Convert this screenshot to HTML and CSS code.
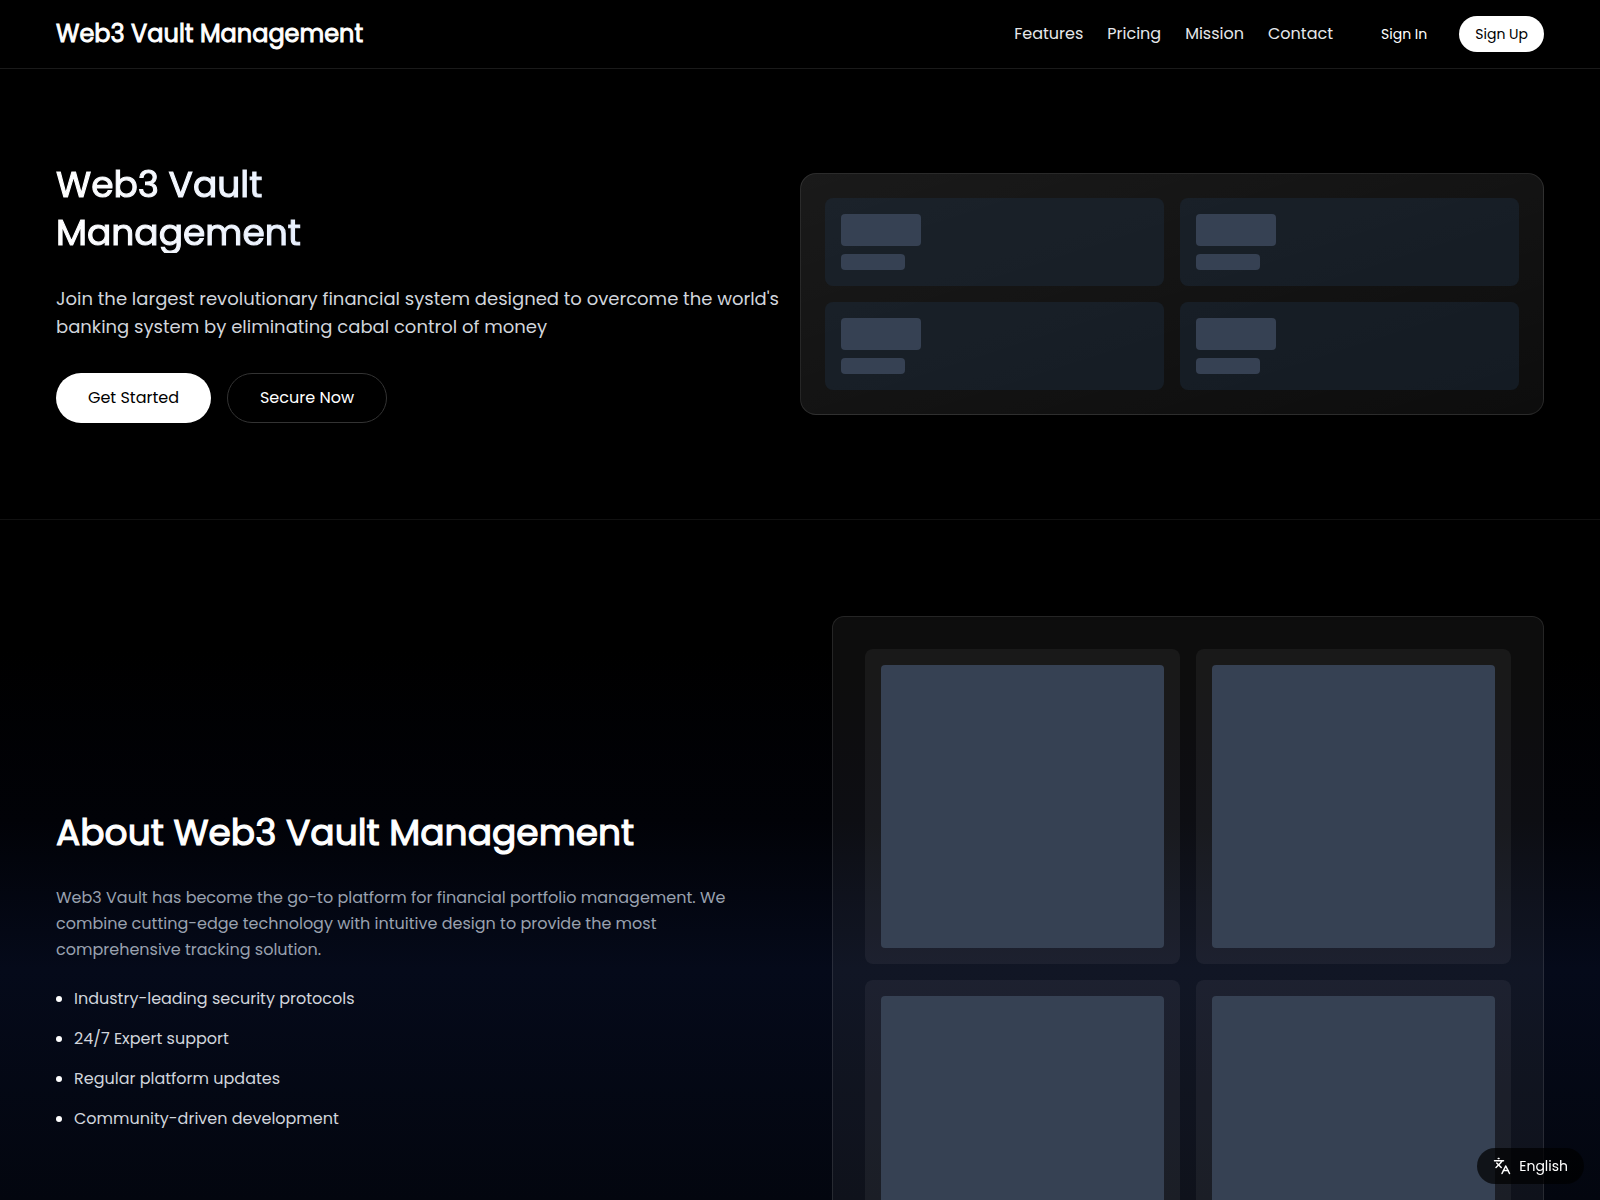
FILE: index.html
```html
<!DOCTYPE html>
<html lang="en">
<head>
    <meta charset="UTF-8">
    <meta name="viewport" content="width=device-width, initial-scale=1.0">
    <title>Web3 Vault Management</title>
    <link rel="stylesheet" href="styles.css">
</head>
<body>

<!-- Header -->
<header class="header">
    <a class="logo" href="#">Web3 Vault Management</a>
    <nav class="nav">
        <a href="#features">Features</a>
        <a href="#pricing">Pricing</a>
        <a href="#mission">Mission</a>
        <a href="#contact">Contact</a>
    </nav>
    <div class="auth">
        <button class="sign-in">Sign In</button>
        <button class="sign-up">Sign Up</button>
    </div>
</header>

<!-- Hero -->
<section class="hero">
    <div class="hero-text">
        <h1><span>Web3 Vault</span><span>Management</span></h1>
        <p>Join the largest revolutionary financial system designed to overcome the world's banking system by eliminating cabal control of money</p>
        <div class="hero-buttons">
            <button class="button button-white">Get Started</button>
            <button class="button button-outline">Secure Now</button>
        </div>
    </div>
    <div class="hero-card">
        <div class="stat"><div class="bar bar-large"></div><div class="bar bar-small"></div></div>
        <div class="stat"><div class="bar bar-large"></div><div class="bar bar-small"></div></div>
        <div class="stat"><div class="bar bar-large"></div><div class="bar bar-small"></div></div>
        <div class="stat"><div class="bar bar-large"></div><div class="bar bar-small"></div></div>
    </div>
</section>

<!-- About -->
<section class="about">
    <div class="about-text">
        <h2>About Web3 Vault Management</h2>
        <p>Web3 Vault has become the go-to platform for financial portfolio management. We combine cutting-edge technology with intuitive design to provide the most comprehensive tracking solution.</p>
        <ul>
            <li>Industry-leading security protocols</li>
            <li>24/7 Expert support</li>
            <li>Regular platform updates</li>
            <li>Community-driven development</li>
        </ul>
    </div>
    <div class="about-card">
        <div class="tile"><div class="tile-image"></div></div>
        <div class="tile"><div class="tile-image"></div></div>
        <div class="tile"><div class="tile-image"></div></div>
        <div class="tile"><div class="tile-image"></div></div>
    </div>
</section>

<!-- Language switch -->
<button class="language">
    <svg width="18" height="18" viewBox="0 0 24 24" fill="none" stroke="currentColor" stroke-width="2" stroke-linecap="round" stroke-linejoin="round">
        <path d="m5 8 6 6"/>
        <path d="m4 14 6-6 2-3"/>
        <path d="M2 5h12"/>
        <path d="M7 2h1"/>
        <path d="m22 22-5-10-5 10"/>
        <path d="M14 18h6"/>
    </svg>
    <span>English</span>
</button>

</body>
</html>
```
FILE: styles.css
```css
* {
    box-sizing: border-box;
}

body {
    font-family: "Poppins", "Inter", sans-serif;
    margin: 0;
    background-color: #000;
    color: #fff;
    font-size: 16px;
    line-height: 24px;
    height: 1200px;
    overflow: hidden;
}

h1, h2, p, ul {
    margin: 0;
    padding: 0;
}

a {
    color: inherit;
    text-decoration: none;
}

button {
    font: inherit;
    border: none;
    border-radius: 999px;
    cursor: pointer;
    white-space: nowrap;
}

.header {
    display: flex;
    align-items: center;
    height: 69px;
    padding: 0 56px;
    border-bottom: 1px solid #1a1a1a;
}

.logo {
    font-size: 24px;
    -webkit-text-stroke: 0.9px #fff;
    margin-right: auto;
}

.nav {
    display: flex;
    gap: 24px;
    margin-right: 32px;
    color: #e5e7eb;
}

.auth {
    display: flex;
    gap: 16px;
}

.sign-in,
.sign-up {
    height: 36px;
    padding: 0 16px;
    font-size: 14px;
    color: #fff;
    background: none;
}

.sign-up {
    color: #000;
    background-color: #fff;
}

.hero {
    display: grid;
    grid-template-columns: 1fr 1fr;
    align-items: center;
    padding: 96px 56px;
    border-bottom: 1px solid #111;
}

.hero h1 {
    display: flex;
    flex-direction: column;
    align-items: flex-start;
    gap: 8px;
    width: 248px;
    font-size: 36px;
    line-height: 40px;
    font-weight: 400;
    color: transparent;
    -webkit-text-stroke: 1.125px transparent;
    background: linear-gradient(to right, #fff, #e8f0fe);
    -webkit-background-clip: text;
    background-clip: text;
    margin-bottom: 32px;
}

.hero p {
    font-size: 18px;
    line-height: 28px;
    color: #d1d5dc;
    margin-bottom: 32px;
}

.hero-buttons {
    display: flex;
    gap: 16px;
}

.button {
    height: 50px;
    padding: 0;
}

.button-white {
    width: 155px;
    color: #000;
    background-color: #fff;
}

.button-outline {
    width: 160px;
    color: #fff;
    background: none;
    border: 1px solid #333;
}

.hero-card {
    display: grid;
    grid-template-columns: 1fr 1fr;
    gap: 16px;
    padding: 24px;
    border: 1px solid rgba(255, 255, 255, 0.1);
    border-radius: 16px;
    background: linear-gradient(to bottom right, rgba(255, 255, 255, 0.1), rgba(255, 255, 255, 0.05));
}

.stat {
    height: 88px;
    padding: 16px;
    border-radius: 8px;
    background-color: rgba(30, 48, 68, 0.4);
}

.bar {
    border-radius: 4px;
    background-color: #364153;
}

.bar-large {
    width: 80px;
    height: 32px;
    margin-bottom: 8px;
}

.bar-small {
    width: 64px;
    height: 16px;
}

.about {
    display: grid;
    grid-template-columns: 1fr 1fr;
    gap: 64px;
    align-items: center;
    padding: 96px 56px;
    background: linear-gradient(to bottom, #000 0, #000 130px, #010207 300px, #050a1a 450px, #03060f 680px, #02030a);
}

.about h2 {
    font-size: 36px;
    line-height: 40px;
    font-weight: 400;
    -webkit-text-stroke: 1.125px #fff;
    margin-bottom: 32px;
}

.about p {
    line-height: 26px;
    color: #99a1af;
    margin-bottom: 24px;
}

.about ul {
    list-style: none;
    display: flex;
    flex-direction: column;
    gap: 16px;
    color: #d1d5dc;
}

.about li {
    display: flex;
    align-items: center;
    gap: 12px;
}

.about li::before {
    content: "";
    width: 6px;
    height: 6px;
    border-radius: 50%;
    background-color: #fff;
}

.about-card {
    display: grid;
    grid-template-columns: 1fr 1fr;
    gap: 16px;
    padding: 32px;
    border: 1px solid rgba(255, 255, 255, 0.1);
    border-radius: 12px;
    background-color: rgba(255, 255, 255, 0.05);
}

.tile {
    padding: 16px;
    border-radius: 8px;
    background-color: rgba(255, 255, 255, 0.05);
}

.tile-image {
    aspect-ratio: 1;
    border-radius: 4px;
    background-color: #364153;
}

.language {
    position: fixed;
    right: 16px;
    bottom: 16px;
    display: flex;
    align-items: center;
    gap: 8px;
    height: 36px;
    padding: 0 16px;
    font-size: 14px;
    color: #fff;
    background-color: rgba(0, 0, 0, 0.7);
}
```
